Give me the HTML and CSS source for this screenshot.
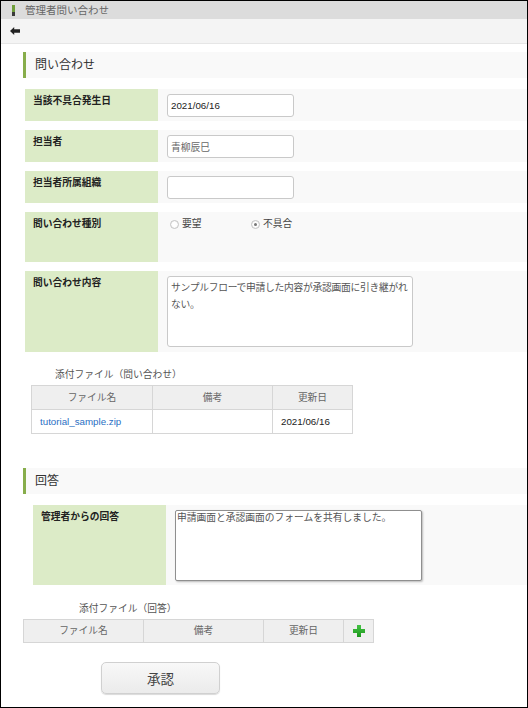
FILE: index.html
```html
<!DOCTYPE html>
<html lang="ja">
<head>
<meta charset="utf-8">
<title>管理者問い合わせ</title>
<link rel="stylesheet" href="styles.css">
</head>
<body>
<div class="page">
  <div class="titlebar"><span class="mark"></span><span class="title">管理者問い合わせ</span></div>
  <div class="toolbar">
    <svg class="back" width="10" height="8" viewBox="0 0 10 8"><polygon points="0,4 4.2,0 4.2,2.3 10,2.3 10,5.7 4.2,5.7 4.2,8" fill="#222"/></svg>
  </div>

  <section class="sec sec1">
    <h2 class="sec-head">問い合わせ</h2>
    <div class="rows rows1">
      <div class="row h32">
        <div class="label">当該不具合発生日</div>
        <div class="value"><input class="field" type="text" value="2021/06/16"></div>
      </div>
      <div class="row h32">
        <div class="label">担当者</div>
        <div class="value"><input class="field grey" type="text" value="青柳辰巳"></div>
      </div>
      <div class="row h32">
        <div class="label">担当者所属組織</div>
        <div class="value"><input class="field" type="text" value=""></div>
      </div>
      <div class="row h50">
        <div class="label">問い合わせ種別</div>
        <div class="value">
          <div class="radios">
            <label class="radio"><span class="circle"></span><span class="rtext">要望</span></label>
            <label class="radio"><span class="circle checked"></span><span class="rtext">不具合</span></label>
          </div>
        </div>
      </div>
      <div class="row h81">
        <div class="label">問い合わせ内容</div>
        <div class="value"><textarea class="area area1">サンプルフローで申請した内容が承認画面に引き継がれない。</textarea></div>
      </div>
    </div>
    <div class="attach attach1">
      <div class="caption">添付ファイル（問い合わせ）</div>
      <table class="files files1">
        <colgroup><col class="c1"><col class="c2"><col class="c3"></colgroup>
        <thead><tr><th>ファイル名</th><th>備考</th><th>更新日</th></tr></thead>
        <tbody><tr><td><a class="link" href="#">tutorial_sample.zip</a></td><td></td><td>2021/06/16</td></tr></tbody>
      </table>
    </div>
  </section>

  <section class="sec sec2">
    <h2 class="sec-head">回答</h2>
    <div class="rows rows2">
      <div class="row h80">
        <div class="label">管理者からの回答</div>
        <div class="value"><textarea class="area area2">申請画面と承認画面のフォームを共有しました。</textarea></div>
      </div>
    </div>
    <div class="attach attach2">
      <div class="caption">添付ファイル（回答）</div>
      <table class="files files2">
        <colgroup><col class="c1"><col class="c2"><col class="c3"><col class="c4"></colgroup>
        <thead><tr><th>ファイル名</th><th>備考</th><th>更新日</th><th class="add">
          <svg width="12" height="12" viewBox="0 0 12 12"><defs><linearGradient id="g" x1="0" y1="0" x2="0" y2="1"><stop offset="0" stop-color="#45c345"/><stop offset="1" stop-color="#1d971d"/></linearGradient></defs><path d="M4,0H8V4H12V8H8V12H4V8H0V4H4Z" fill="url(#g)"/></svg>
        </th></tr></thead>
      </table>
    </div>
  </section>

  <div class="actions"><button class="btn" type="button">承認</button></div>
</div>
</body>
</html>
```

FILE: styles.css
```css
html, body {
  margin: 0;
  padding: 0;
  background: #fff;
}

.page {
  width: 528px;
  height: 708px;
  box-sizing: border-box;
  border: 1px solid #000;
  overflow: hidden;
  background: #fff;
  font-family: "Liberation Sans", "Noto Sans CJK JP", sans-serif;
  font-size: 9.75px;
  color: #333;
}

.titlebar {
  height: 18px;
  background: #dcdcdc;
  display: flex;
  align-items: center;
}

.mark {
  width: 3px;
  height: 11px;
  margin-left: 11px;
  background: linear-gradient(#6f9e3a 0, #6f9e3a 64%, #3a3a3a 64%, #3a3a3a 100%);
}

.title {
  margin-left: 10px;
  font-size: 10.5px;
  color: #666;
  line-height: 18px;
}

.toolbar {
  height: 24px;
  background: #f4f4f4;
  border-bottom: 1px solid #e6e6e6;
  display: flex;
  align-items: center;
  padding-left: 9px;
}

.back {
  display: block;
}

.sec {
  margin-left: 22px;
}

.sec1 {
  margin-top: 8px;
}

.sec2 {
  margin-top: 34px;
}

.sec-head {
  margin: 0;
  height: 26px;
  line-height: 26px;
  background: #f9f9f9;
  border-left: 3px solid #87ad4b;
  padding-left: 9px;
  font-size: 12px;
  font-weight: normal;
  color: #333;
}

.rows {
  display: flex;
  flex-direction: column;
  gap: 9px;
  margin-top: 11px;
}

.rows1 {
  margin-left: 2px;
}

.rows2 {
  margin-left: 10px;
}

.row {
  display: flex;
}

.h32 { height: 32px; }
.h50 { height: 50px; }
.h80 { height: 80px; }
.h81 { height: 81px; }

.label {
  width: 133px;
  flex: none;
  box-sizing: border-box;
  background: #dcebc7;
  padding: 5px 8px;
  font-weight: bold;
  line-height: 14px;
  color: #222;
}

.value {
  flex: 1;
  background: #f9f9f9;
  padding: 5px 9px;
}

.field {
  display: block;
  width: 127px;
  height: 23px;
  box-sizing: border-box;
  margin: 0;
  border: 1px solid #c9c9c9;
  border-radius: 3px;
  padding: 0 3px;
  background: #fff;
  font-family: inherit;
  font-size: 9.75px;
  color: #222;
}

.field.grey {
  color: #666;
}

.radios {
  display: flex;
  line-height: 14px;
}

.radio {
  display: flex;
  align-items: center;
  width: 81px;
  color: #444;
}

.circle {
  width: 9px;
  height: 9px;
  box-sizing: border-box;
  margin-left: 3px;
  border: 1px solid #c4c4c4;
  border-radius: 50%;
  background: radial-gradient(circle, #fff 40%, #ececec 100%);
  position: relative;
}

.circle.checked::after {
  content: "";
  position: absolute;
  left: 2px;
  top: 2px;
  width: 3px;
  height: 3px;
  border-radius: 50%;
  background: #777;
}

.rtext {
  margin-left: 3px;
}

.area {
  display: block;
  box-sizing: border-box;
  margin: 0;
  resize: none;
  background: #fff;
  font-family: inherit;
  font-size: 9.75px;
  color: #555;
  overflow: hidden;
}

.area1 {
  width: 246px;
  height: 71px;
  border: 1px solid #c9c9c9;
  border-radius: 3px;
  padding: 2px 3px;
  line-height: 17px;
  letter-spacing: -0.25px;
}

.area2 {
  width: 247px;
  height: 71px;
  border: 1px solid #8f8f8f;
  border-radius: 2px;
  padding: 0 1px;
  line-height: 14px;
  box-shadow: 1px 1px 2px rgba(0, 0, 0, 0.25);
}

.attach1 {
  margin-left: 8px;
}

.caption {
  line-height: 14px;
  color: #555;
  margin-bottom: 3px;
}

.attach1 .caption {
  margin-top: 16px;
  padding-left: 24px;
}

.attach2 .caption {
  margin-top: 17px;
  padding-left: 56px;
}

.files {
  border-collapse: collapse;
  table-layout: fixed;
}

.files1 { width: 321px; }
.files2 { width: 350px; }

.files1 .c1 { width: 121px; }
.files1 .c2 { width: 120px; }
.files1 .c3 { width: 80px; }

.files2 .c1 { width: 120px; }
.files2 .c2 { width: 120px; }
.files2 .c3 { width: 80px; }
.files2 .c4 { width: 30px; }

.files th,
.files td {
  border: 1px solid #d6d6d6;
  padding: 0;
  font-size: 9.75px;
}

.files th {
  background: #efefef;
  font-weight: normal;
  color: #666;
  text-align: center;
}

.files td {
  background: #fff;
  padding-left: 8px;
  color: #222;
}

.files1 th,
.files1 td {
  line-height: 23px;
}

.files2 th {
  line-height: 22px;
}

.files th.add svg {
  display: block;
  margin: 0 auto;
}

.link {
  color: #2a6fc4;
  text-decoration: none;
}

.actions {
  margin-top: 19px;
  padding-left: 100px;
}

.btn {
  display: block;
  width: 119px;
  height: 32px;
  margin: 0;
  border: 1px solid #d0d0d0;
  border-radius: 5px;
  background: linear-gradient(#f8f8f8, #ebebeb);
  box-shadow: 0 1px 1px rgba(0, 0, 0, 0.15);
  font-family: inherit;
  font-size: 13.5px;
  color: #444;
}
```
